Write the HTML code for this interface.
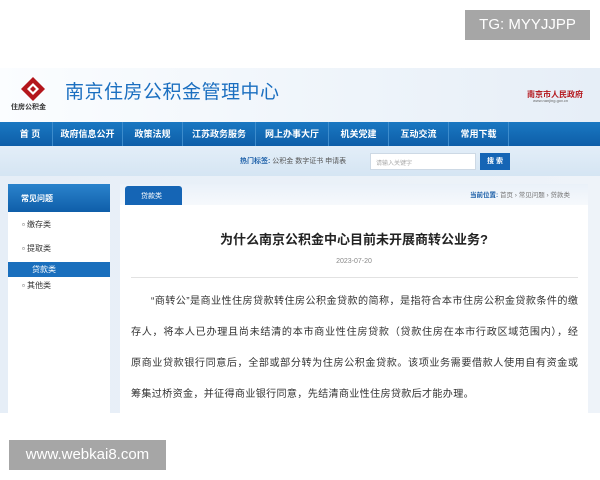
<!DOCTYPE html>
<html><head><meta charset="utf-8"><style>
*{margin:0;padding:0;box-sizing:border-box}
body{width:600px;height:480px;background:#fff;position:relative;overflow:hidden;font-family:"Liberation Sans","Noto Sans CJK SC",sans-serif}
.abs{position:absolute}
.hdr{left:0;top:68px;width:600px;height:54px;background:linear-gradient(90deg,#fbfdff,#eef4fa 60%,#e6eef7)}
.nav{left:0;top:122px;width:600px;height:24px;background:linear-gradient(#1a78c2,#0e5ea8);display:flex;padding-left:8px}
.nav div{color:#fff;font-size:9px;font-weight:bold;text-align:center;line-height:24px;border-right:1px solid #3d8ccc}
.sb{left:0;top:146px;width:600px;height:30px;background:linear-gradient(#e3eef8,#d5e5f3)}
.ct{left:0;top:176px;width:600px;height:237px;background:linear-gradient(90deg,#e6eef7,#eef3f9)}
.p{font-size:10.1px;color:#333;line-height:31px;height:31px;text-align:justify;text-align-last:justify;white-space:nowrap;overflow:hidden}
</style></head><body>
<div class="abs" style="left:465px;top:10px;width:125px;height:30px;background:#a6a6a6;color:#fff;font-size:15px;line-height:30px;text-align:center">TG: MYYJJPP</div>

<div class="abs hdr"></div>
<svg class="abs" style="left:20px;top:76px" width="26" height="26" viewBox="0 0 26 26"><path d="M13 1 L25 13 L13 25 L1 13Z" fill="#b4161c"/><path d="M13 7 L19 13 L13 19 L7 13Z" fill="#fff"/><path d="M13 10 L16 13 L13 16 L10 13Z" fill="#b4161c"/></svg>
<div class="abs" style="left:11px;top:102px;font-size:7px;color:#333;font-weight:bold">住房公积金</div>
<div class="abs" style="left:65px;top:77px;font-size:19px;color:#1b6fc0;letter-spacing:0.5px">南京住房公积金管理中心</div>
<div class="abs" style="left:527px;top:89px;font-size:8px;color:#b4161c;font-weight:bold">南京市人民政府</div>
<div class="abs" style="left:533px;top:98px;font-size:4px;color:#666">www.nanjing.gov.cn</div>

<div class="abs nav"><div style="width:45px">首 页</div><div style="width:70px">政府信息公开</div><div style="width:60px">政策法规</div><div style="width:73px">江苏政务服务</div><div style="width:73px">网上办事大厅</div><div style="width:60px">机关党建</div><div style="width:60px">互动交流</div><div style="width:60px">常用下载</div></div>

<div class="abs sb"></div>
<div class="abs" style="left:240px;top:156px;font-size:7px;color:#555"><b style="color:#1b5fa8">热门标签:</b> 公积金 数字证书 申请表</div>
<div class="abs" style="left:370px;top:153px;width:106px;height:17px;background:#fff;border:1px solid #cdd9e5;font-size:6px;color:#aaa;padding:4px 5px">请输入关键字</div>
<div class="abs" style="left:480px;top:153px;width:30px;height:17px;background:#1565b5;color:#fff;font-size:7px;font-weight:bold;text-align:center;line-height:17px">搜 索</div>

<div class="abs ct"></div>
<div class="abs" style="left:8px;top:184px;width:102px;height:229px;background:#fff"></div>
<div class="abs" style="left:8px;top:184px;width:102px;height:28px;background:linear-gradient(#2a83cc,#0f5ea9);color:#fff;font-size:8px;font-weight:bold;padding:9px 13px">常见问题</div>
<div class="abs" style="left:22px;top:221px;font-size:8px;color:#333;line-height:1">▫ 缴存类</div>
<div class="abs" style="left:22px;top:245px;font-size:8px;color:#333;line-height:1">▫ 提取类</div>
<div class="abs" style="left:8px;top:262px;width:102px;height:15px;background:#1a6fbd;color:#fff;font-size:8px;padding:3px 24px;line-height:9px">贷款类</div>
<div class="abs" style="left:22px;top:282px;font-size:8px;color:#333;line-height:1">▫ 其他类</div>

<div class="abs" style="left:120px;top:184px;width:468px;height:229px;background:#fff"></div>
<div class="abs" style="left:120px;top:184px;width:468px;height:21px;background:linear-gradient(#eaf1f9,#f6f9fc)"></div>
<div class="abs" style="left:125px;top:186px;width:57px;height:19px;background:#1565b5;border-radius:3px 3px 0 0;color:#fff;font-size:7px;padding:5px 16px">贷款类</div>
<div class="abs" style="left:470px;top:189px;font-size:6.5px;color:#777"><b style="color:#1b5fa8">当前位置:</b> 首页 › 常见问题 › 贷款类</div>
<div class="abs" style="left:120px;top:229px;width:468px;text-align:center;font-size:13px;font-weight:bold;color:#222">为什么南京公积金中心目前未开展商转公业务?</div>
<div class="abs" style="left:120px;top:258px;width:468px;text-align:center;font-size:7px;color:#888">2023-07-20</div>
<div class="abs" style="left:131px;top:277px;width:447px;height:1px;background:#e2e2e2"></div>

<div class="abs" style="left:131px;top:286px;width:447px">
<div class="p" style="padding-left:20px">“商转公”是商业性住房贷款转住房公积金贷款的简称，是指符合本市住房公积金贷款条件的缴</div>
<div class="p">存人，将本人已办理且尚未结清的本市商业性住房贷款（贷款住房在本市行政区域范围内），经</div>
<div class="p">原商业贷款银行同意后，全部或部分转为住房公积金贷款。该项业务需要借款人使用自有资金或</div>
<div class="p" style="text-align-last:left;letter-spacing:0.3px">筹集过桥资金，并征得商业银行同意，先结清商业性住房贷款后才能办理。</div>
</div>

<div class="abs" style="left:9px;top:440px;width:157px;height:30px;background:#a6a6a6;color:#fff;font-size:15px;line-height:30px;text-align:center">www.webkai8.com</div>
</body></html>
